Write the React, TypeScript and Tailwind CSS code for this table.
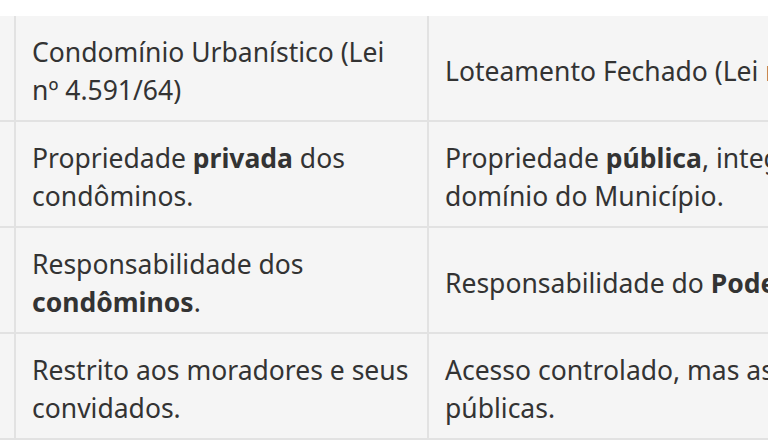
import React from "react";

const rows: [React.ReactNode, React.ReactNode][] = [
  [
    <>Condomínio Urbanístico (Lei nº 4.591/64)</>,
    <>Loteamento Fechado (Lei nº 6.766/79)</>,
  ],
  [
    <>Propriedade <b className="font-bold">privada</b> dos condôminos.</>,
    <>Propriedade <b className="font-bold">pública</b>, integrante do domínio do Município.</>,
  ],
  [
    <>Responsabilidade dos <b className="font-bold">condôminos</b>.</>,
    <>Responsabilidade do <b className="font-bold">Poder Público</b>.</>,
  ],
  [
    <>Restrito aos moradores e seus convidados.</>,
    <>Acesso controlado, mas as ruas são públicas.</>,
  ],
];

export default function App() {
  return (
    <div className="w-[768px] h-[448px] overflow-hidden bg-white pt-4">
      <div
        className="w-[1300px] bg-[#f5f5f5] text-[#333] text-[26.5px] leading-[38px]"
        style={{ fontFamily: '"Noto Sans", sans-serif' }}
      >
        {rows.map((r, i) => (
          <div
            key={i}
            className="grid grid-cols-[16px_413px_510px_1fr] border-b-[2px] border-[#e2e2e2] h-[106px]"
          >
            <div className="border-r-[2px] border-[#e2e2e2]" />
            <div className="border-r-[2px] border-[#e2e2e2] px-4 pt-[5px] flex items-center">
              <div>{r[0]}</div>
            </div>
            <div className="border-r-[2px] border-[#e2e2e2] px-4 pt-[5px] flex items-center">
              <div>{r[1]}</div>
            </div>
            <div />
          </div>
        ))}
      </div>
    </div>
  );
}
